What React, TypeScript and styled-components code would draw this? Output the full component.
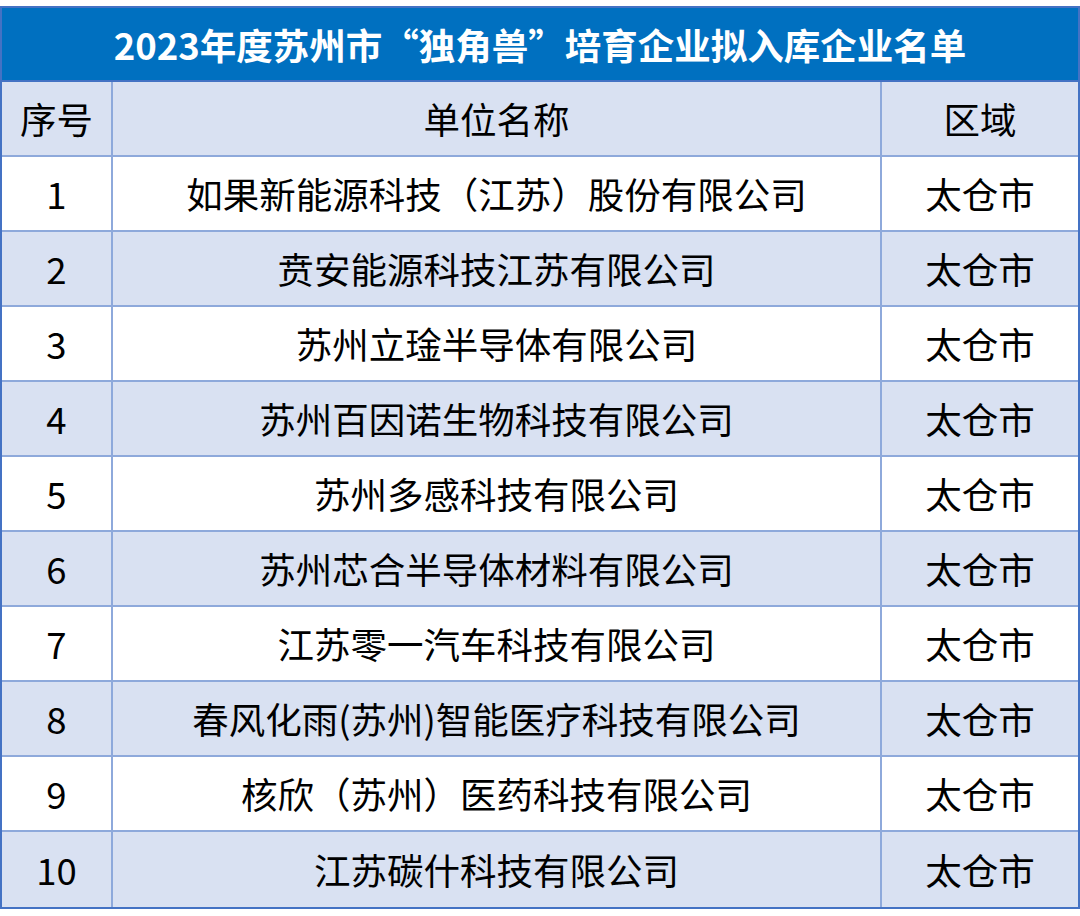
import styled, { createGlobalStyle } from "styled-components";

const GlobalStyle = createGlobalStyle`
  html, body {
    margin: 0;
    padding: 0;
    background: #ffffff;
  }
  body {
    font-family: "Noto Sans CJK SC", "Noto Sans", sans-serif;
  }
`;

const Page = styled.div`
  width: 1080px;
  padding-top: 6px;
  box-sizing: border-box;
`;

const Frame = styled.div`
  width: 1080px;
  box-sizing: border-box;
  border: 2px solid #4472c4;
`;

const Title = styled.div`
  height: 72px;
  background: #0070c0;
  border-bottom: 2px solid #4472c4;
  color: #ffffff;
  font-weight: 700;
  font-size: 36.5px;
  display: flex;
  align-items: center;
  justify-content: center;
`;

const Row = styled.div<{ $shaded: boolean; $last?: boolean }>`
  display: grid;
  grid-template-columns: 111px 769px 196px;
  height: 75px;
  box-sizing: border-box;
  background: ${(p) => (p.$shaded ? "#d9e1f2" : "#ffffff")};
  border-bottom: ${(p) => (p.$last ? "none" : "2px solid #8ea9db")};
`;

const Cell = styled.div<{ $end?: boolean }>`
  display: flex;
  align-items: center;
  justify-content: center;
  font-size: 36.5px;
  color: #000000;
  white-space: nowrap;
  border-right: ${(p) => (p.$end ? "none" : "2px solid #8ea9db")};
`;

const rows = [
  "如果新能源科技（江苏）股份有限公司",
  "贲安能源科技江苏有限公司",
  "苏州立琻半导体有限公司",
  "苏州百因诺生物科技有限公司",
  "苏州多感科技有限公司",
  "苏州芯合半导体材料有限公司",
  "江苏零一汽车科技有限公司",
  "春风化雨(苏州)智能医疗科技有限公司",
  "核欣（苏州）医药科技有限公司",
  "江苏碳什科技有限公司",
];

export default function App() {
  return (
    <Page>
      <GlobalStyle />
      <Frame>
        <Title>2023年度苏州市“独角兽”培育企业拟入库企业名单</Title>
        <Row $shaded>
          <Cell>序号</Cell>
          <Cell>单位名称</Cell>
          <Cell $end>区域</Cell>
        </Row>
        {rows.map((name, i) => (
          <Row key={i} $shaded={i % 2 === 1} $last={i === rows.length - 1}>
            <Cell>{i + 1}</Cell>
            <Cell>{name}</Cell>
            <Cell $end>太仓市</Cell>
          </Row>
        ))}
      </Frame>
    </Page>
  );
}
